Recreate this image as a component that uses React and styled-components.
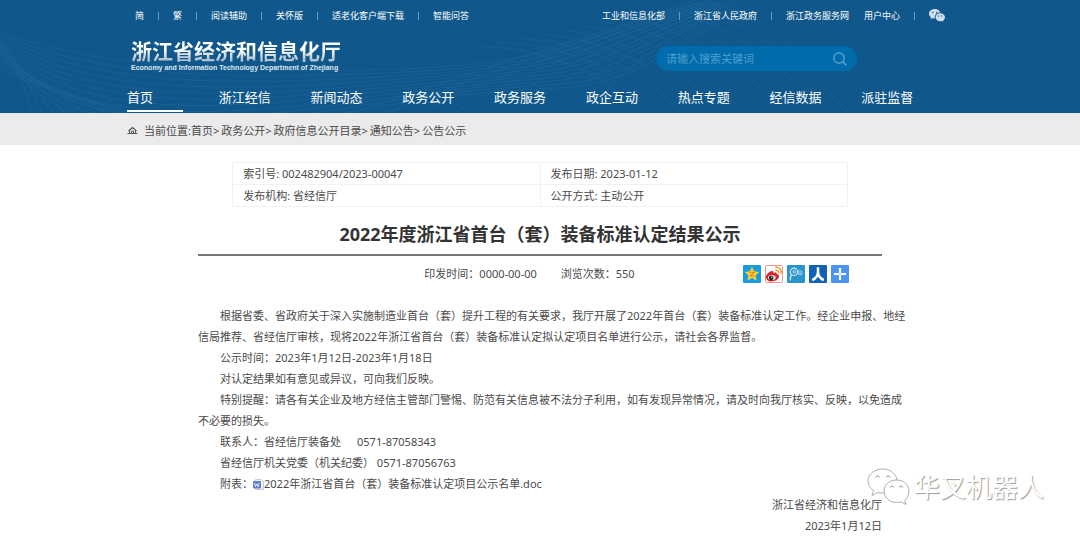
import { Fragment, useState } from "react";
import styled, { createGlobalStyle } from "styled-components";

const linksLeft = ["简", "繁", "阅读辅助", "关怀版", "适老化客户端下载", "智能问答"];
const linksRight = ["工业和信息化部", "浙江省人民政府", "浙江政务服务网"];
const navItems = [
  "首页",
  "浙江经信",
  "新闻动态",
  "政务公开",
  "政务服务",
  "政企互动",
  "热点专题",
  "经信数据",
  "派驻监督",
];
const crumbs = ["首页", "政务公开", "政府信息公开目录", "通知公告", "公告公示"];

const range = (n) => Array.from({ length: n }, (_, i) => i);

const Waves = () => (
  <WaveSvg viewBox="0 0 1080 113" preserveAspectRatio="xMidYMid slice" aria-hidden="true">
    {range(11).map((i) => (
      <path
        key={`a${i}`}
        d={`M0 ${31 + i * 2} C ${60 - i} ${54 + i * 7}, ${150 - i * 3} ${74 + i * 8}, 360 ${70 + i * 4} S 560 ${42 + i * 8}, 720 ${-8 + i * 3}`}
      />
    ))}
    {range(11).map((i) => (
      <path key={`b${i}`} d={`M0 ${40 + i * 3} Q ${18 + i * 3} ${62 + i * 3}, ${32 + i * 11} 114`} />
    ))}
    {range(8).map((i) => (
      <path key={`c${i}`} d={`M${350 + i * 34} 114 Q ${480 + i * 22} ${68 - i * 3}, ${700 + i * 6} 2`} />
    ))}
    {range(12).map((i) => (
      <path
        key={`d${i}`}
        d={`M${480 + i * 21} ${46 - i * 4} Q ${590 + i * 17} ${52 - i * 3}, ${640 + i * 21} 114`}
      />
    ))}
  </WaveSvg>
);

const WechatIcon = () => (
  <svg width="16" height="13" viewBox="0 0 32 26" aria-hidden="true">
    <path
      fill="#cfdfec"
      d="M11.500 0C5.200 0 0 4.300 0 9.600c0 3 1.700 5.700 4.300 7.500L3.200 20.500l4-2c1.400.4 2.800.6 4.500.6C10.200 12.500 15.500 7 22.700 7.200 21.500 3 17 0 11.500 0z"
    />
    <path
      fill="#cfdfec"
      d="M22.500 8.500c-5.300 0-9.500 3.500-9.500 8s4.200 8 9.500 8c1.200 0 2.300-.2 3.400-.5l3.100 1.700-.9-2.900c2.400-1.500 3.900-3.800 3.900-6.300 0-4.500-4.200-8-9.500-8z"
    />
    <g fill="#10578b">
      <circle cx="7.800" cy="6.800" r="1.500" />
      <circle cx="15.200" cy="6.800" r="1.500" />
      <circle cx="19.500" cy="14" r="1.300" />
      <circle cx="25.500" cy="14" r="1.300" />
    </g>
  </svg>
);

const SearchIcon = () => (
  <svg width="14" height="14" viewBox="0 0 14 14" fill="none" stroke="#65a9d2" aria-hidden="true">
    <circle cx="6" cy="6" r="5.200" strokeWidth="1.200" />
    <path d="M9.800 9.800L13.200 13.200" strokeWidth="1.300" />
  </svg>
);

const HomeIcon = () => (
  <svg width="11" height="9" viewBox="0 0 11 9" fill="none" stroke="#555" aria-hidden="true">
    <path d="M1.500 5L5.500 1.500l4 3.500" strokeWidth="1.200" />
    <path d="M2.500 5v2.800M8.500 5v2.800M4.500 7.500V5.200h2v2.300" />
    <path d="M.5 7.500h10" />
  </svg>
);

const DocIcon = () => (
  <svg width="11" height="11" viewBox="0 0 11 11" aria-hidden="true">
    <path d="M2.500.5h6l2 2v8h-8z" fill="#f3f3f3" stroke="#bcc1c8" strokeWidth=".8" />
    <rect x="0" y="2" width="8" height="7.500" rx=".8" fill="#5f82cd" />
    <path d="M1.500 4l1 3.500 1.200-2.500L5 7.500 6 4" fill="none" stroke="#fff" strokeWidth=".8" />
  </svg>
);

const shares = [
  {
    name: "QQ空间",
    art: (
      <>
        <rect width="18" height="18" rx="1" fill="#189be0" />
        <path
          d="M9 1.800l2.200 4.500 5 .7-3.600 3.500.9 5L9 13.100l-4.500 2.400.9-5L1.800 7l5-.7z"
          fill="#ffd034"
        />
        <path d="M6.300 7.200h5L7.500 10.800l4.200.3" fill="none" stroke="#e08a12" strokeWidth="1.100" />
      </>
    ),
  },
  {
    name: "新浪微博",
    art: (
      <>
        <rect x=".5" y=".5" width="17" height="17" rx="1" fill="#fff" stroke="#ec9492" />
        <path
          d="M1 12C1 9.500 5 5.500 7.500 6c1 .2.900 1.200.7 1.900 2-.8 4-.6 3.600 1.200 1.800.4 2.500 1.500 2.100 3C13.200 14.600 10 16.500 6.500 16.500 3 16.500 1 14.500 1 12z"
          fill="#d9222a"
        />
        <ellipse cx="6.800" cy="12.600" rx="3.800" ry="2.500" fill="#fff" />
        <circle cx="6.200" cy="12.800" r="2.400" fill="#222" />
        <circle cx="6.800" cy="12.200" r=".7" fill="#fff" />
        <path
          d="M10.500 5.300c2-.5 3.700 1.300 3 3.200M10.300 2.500c3.800-.8 7 2.500 5.800 6.300"
          fill="none"
          stroke="#f0962c"
          strokeWidth="1.500"
        />
      </>
    ),
  },
  {
    name: "腾讯微博",
    art: (
      <>
        <rect width="18" height="18" rx="1" fill="#2994c9" />
        <g fill="none" stroke="#c5e6f5">
          <circle cx="7" cy="6.800" r="3.700" strokeWidth="1.200" />
          <circle cx="7.200" cy="6.800" r="1.300" />
          <path d="M4.600 9.500C3.500 11 3.300 13 3.200 15.500" strokeWidth="1.300" />
          <circle cx="13" cy="7.800" r="2.100" strokeWidth=".8" />
          <circle cx="13" cy="7.800" r=".6" strokeWidth=".6" />
        </g>
      </>
    ),
  },
  {
    name: "人人网",
    art: (
      <>
        <rect width="18" height="18" rx="1" fill="#1162b7" />
        <path
          d="M9 2.200v4.600C9 10.500 6.500 13.700 3.200 15M9 6.800c0 3.700 2.500 6.900 5.800 8.200"
          fill="none"
          stroke="#fff"
          strokeWidth="2.500"
        />
      </>
    ),
  },
  {
    name: "更多",
    art: (
      <>
        <rect width="18" height="18" rx="1" fill="#4c95ee" />
        <path d="M9 3v12M3 9h12" stroke="#fff" strokeWidth="2.200" />
        <path d="M8 9h2M9 8v2" stroke="#8fbdf5" strokeWidth="1" />
      </>
    ),
  },
];

const App = () => {
  const [active, setActive] = useState("首页");
  const [keyword, setKeyword] = useState("");

  return (
    <Page>
      <GlobalStyle />
      <Header>
        <Waves />
        <TopBar>
          <LinkGroup>
            {linksLeft.map((text, i) => (
              <Fragment key={text}>
                {i > 0 && <Separator />}
                <a href="#">{text}</a>
              </Fragment>
            ))}
          </LinkGroup>
          <LinkGroup>
            {linksRight.map((text, i) => (
              <Fragment key={text}>
                {i > 0 && <Separator />}
                <a href="#">{text}</a>
              </Fragment>
            ))}
            <UserLink href="#">用户中心</UserLink>
            <Separator />
            <a href="#" aria-label="微信">
              <WechatIcon />
            </a>
          </LinkGroup>
        </TopBar>
        <Brand>
          <Logo href="#">
            <LogoName>浙江省经济和信息化厅</LogoName>
            <LogoSub>Economy and Information Technology Department of Zhejiang</LogoSub>
          </Logo>
          <Search onSubmit={(e) => e.preventDefault()}>
            <input
              type="text"
              aria-label="搜索"
              placeholder="请输入搜索关键词"
              value={keyword}
              onChange={(e) => setKeyword(e.target.value)}
            />
            <button type="submit" aria-label="搜索">
              <SearchIcon />
            </button>
          </Search>
        </Brand>
        <Nav>
          {navItems.map((item) => (
            <NavLink key={item} href="#" $active={item === active} onClick={() => setActive(item)}>
              {item}
            </NavLink>
          ))}
        </Nav>
      </Header>
      <CrumbBar>
        <Crumbs>
          <HomeIcon />
          <CrumbList>
            {crumbs.map((item, i) => (
              <span key={item}>
                {i === 0 && "当前位置:"}
                <a href="#">{item}</a>
                {i < crumbs.length - 1 && ">"}
              </span>
            ))}
          </CrumbList>
        </Crumbs>
      </CrumbBar>
      <Article>
        <Info>
          <tbody>
            <tr>
              <td>索引号: 002482904/2023-00047</td>
              <td>发布日期: 2023-01-12</td>
            </tr>
            <tr>
              <td>发布机构: 省经信厅</td>
              <td>公开方式: 主动公开</td>
            </tr>
          </tbody>
        </Info>
        <Title>2022年度浙江省首台（套）装备标准认定结果公示</Title>
        <Meta>
          <MetaText>
            <span>印发时间：0000-00-00</span>
            <span>浏览次数：550</span>
          </MetaText>
          <Shares>
            {shares.map(({ name, art }) => (
              <button key={name} type="button" aria-label={name}>
                <svg width="18" height="18" viewBox="0 0 18 18" aria-hidden="true">
                  {art}
                </svg>
              </button>
            ))}
          </Shares>
        </Meta>
        <Body>
          <p>
            根据省委、省政府关于深入实施制造业首台（套）提升工程的有关要求，我厅开展了2022年首台（套）装备标准认定工作。经企业申报、地经信局推荐、省经信厅审核，现将2022年浙江省首台（套）装备标准认定拟认定项目名单进行公示，请社会各界监督。
          </p>
          <p>公示时间：2023年1月12日-2023年1月18日</p>
          <p>对认定结果如有意见或异议，可向我们反映。</p>
          <p>
            特别提醒：请各有关企业及地方经信主管部门警惕、防范有关信息被不法分子利用，如有发现异常情况，请及时向我厅核实、反映，以免造成不必要的损失。
          </p>
          <p>
            联系人：省经信厅装备处
            <Phone>0571-87058343</Phone>
          </p>
          <p>省经信厅机关党委（机关纪委） 0571-87056763</p>
          <p>
            附表：
            <FileLink href="#">
              <DocIcon />
              2022年浙江省首台（套）装备标准认定项目公示名单.doc
            </FileLink>
          </p>
        </Body>
        <Signature>
          <p>浙江省经济和信息化厅</p>
          <p>2023年1月12日</p>
        </Signature>
      </Article>
      <Watermark>
        <svg width="43" height="38" viewBox="0 0 43 38" fill="#fff" stroke="#999" strokeWidth=".8">
          <path d="M15.500 1C7.500 1 1 6.300 1 13c0 4 2.200 7.300 5.600 9.500L5 27.500l6-3c1.500.4 3 .6 4.500.6C23.500 25.100 30 19.700 30 13S23.500 1 15.500 1z" />
          <path d="M29.500 12C22.500 12 17 16.800 17 23s5.500 11.500 12.500 11.500c1.500 0 3-.3 4.500-.7l5 2.700-1.300-4.300C40.500 30 42 26.800 42 23c0-6.200-5.500-11-12.500-11z" />
          <g fill="none" strokeWidth="1">
            <path d="M9 9.500a1.700 1.700 0 0 1 3.400 0M19.500 9.500a1.700 1.700 0 0 1 3.400 0M23.500 19.500a1.500 1.500 0 0 1 3 0M32.500 19.500a1.500 1.500 0 0 1 3 0" />
          </g>
        </svg>
        华叉机器人
      </Watermark>
    </Page>
  );
};
export default App;

const GlobalStyle = createGlobalStyle`
  * {
    box-sizing: border-box;
  }
  body {
    margin: 0;
    background: #fff;
    color: #4a4a4a;
    font-family: "Noto Sans", "Noto Sans CJK SC", sans-serif;
    font-size: 11px;
    line-height: 21px;
  }
  a {
    color: inherit;
    text-decoration: none;
  }
  p {
    margin: 0;
  }
  button {
    display: flex;
    padding: 0;
    border: 0;
    background: none;
    cursor: pointer;
  }
`;

const Page = styled.div`
  position: relative;
  min-height: 100vh;
  overflow: hidden;
`;

const Header = styled.header`
  position: relative;
  background-color: #10578b;
  color: #fff;
`;

const WaveSvg = styled.svg`
  position: absolute;
  inset: 0;
  width: 100%;
  height: 100%;
  fill: none;
  stroke: #4b9ccf;
  stroke-width: 0.8;
  opacity: 0.17;
`;

const Container = styled.div`
  position: relative;
  max-width: 826px;
  margin: 0 auto;
`;

const TopBar = styled(Container)`
  display: flex;
  justify-content: space-between;
  height: 31px;
  padding: 0 8px;
  font-size: 9px;
`;

const LinkGroup = styled.div`
  display: flex;
  align-items: center;
  white-space: nowrap;
  svg {
    display: block;
  }
`;

const Separator = styled.i`
  width: 1px;
  height: 8px;
  margin: 0 14px;
  background-color: #6f9bbc;
`;

const UserLink = styled.a`
  margin-left: 15px;
`;

const Brand = styled(Container)`
  display: flex;
  align-items: center;
  justify-content: space-between;
  height: 53px;
  padding: 2px 96px 0 4px;
`;

const Logo = styled.a`
  display: flex;
  flex-direction: column;
  padding-bottom: 6px;
  white-space: nowrap;
`;

const LogoName = styled.span`
  font-size: 21px;
  font-weight: 700;
  line-height: 24px;
  color: transparent;
  background: linear-gradient(#fff 45%, #b4c3d0 85%);
  background-clip: text;
`;

const LogoSub = styled.span`
  font-family: "Liberation Sans", sans-serif;
  font-size: 7px;
  font-weight: 700;
  line-height: 10px;
  color: #dfe8ef;
`;

const Search = styled.form`
  display: flex;
  align-items: center;
  width: 201px;
  height: 25px;
  padding: 0 10px;
  border-radius: 13px;
  background-color: #006cab;
  input {
    flex: 1;
    min-width: 0;
    padding: 0;
    border: 0;
    outline: 0;
    background: none;
    color: #fff;
    font: inherit;
  }
  input::placeholder {
    color: #4f9fcb;
  }
`;

const Nav = styled(Container).attrs({ as: "nav" })`
  display: grid;
  grid-template-columns: repeat(9, 1fr);
  justify-items: start;
  font-size: 13px;
`;

const NavLink = styled.a`
  min-width: 56px;
  height: 28px;
  margin-bottom: 1px;
  line-height: 27px;
  white-space: nowrap;
  border-bottom: 2px solid ${(p) => (p.$active ? "#fff" : "transparent")};
`;

const CrumbBar = styled.div`
  background-color: #ebebeb;
`;

const Crumbs = styled(Container)`
  display: flex;
  align-items: center;
  gap: 6px;
  height: 32px;
  padding-top: 2px;
`;

const CrumbList = styled.div`
  display: flex;
  gap: 2px;
  white-space: nowrap;
`;

const Article = styled.main`
  max-width: 684px;
  margin: 0 auto;
  padding-top: 17px;
`;

const Info = styled.table`
  width: 90%;
  margin: 0 auto;
  border-collapse: collapse;
  table-layout: fixed;
  td {
    padding: 1px 10px 0;
    border: 1px solid #f1f1f1;
    line-height: 20px;
  }
`;

const Title = styled.h1`
  margin: 9px 0 0;
  padding-bottom: 2px;
  border-bottom: 2px solid #757575;
  color: #333;
  font-size: 18px;
  font-weight: 700;
  line-height: 36px;
  text-align: center;
`;

const Meta = styled.div`
  display: grid;
  grid-template-columns: 1fr auto 1fr;
  align-items: center;
  height: 36px;
  padding: 0 33px 0 12px;
`;

const MetaText = styled.div`
  grid-column: 2;
  display: flex;
  gap: 24px;
  padding-bottom: 2px;
`;

const Shares = styled.div`
  display: flex;
  justify-content: flex-end;
  gap: 4px;
`;

const Body = styled.div`
  margin: 13px -26px 0 0;
  p {
    text-indent: 2em;
  }
`;

const Phone = styled.span`
  margin-left: 16px;
`;

const FileLink = styled.a`
  svg {
    vertical-align: -2px;
  }
`;

const Signature = styled.div`
  text-align: right;
`;

const Watermark = styled.div`
  position: absolute;
  right: 36px;
  bottom: 30px;
  display: flex;
  align-items: center;
  gap: 4px;
  color: #fff;
  font-size: 26px;
  line-height: 38px;
  text-shadow: 1px 1px 1px #999;
`;
